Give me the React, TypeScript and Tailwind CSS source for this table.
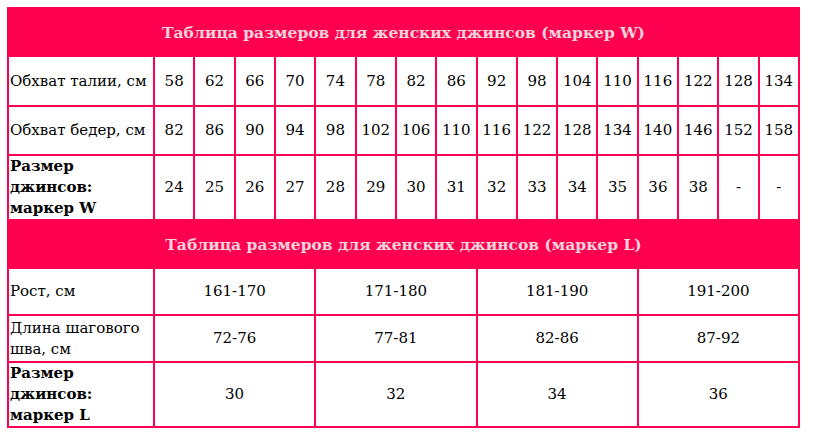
import React from 'react';

const WAIST = ['58', '62', '66', '70', '74', '78', '82', '86', '92', '98', '104', '110', '116', '122', '128', '134'];
const HIPS = ['82', '86', '90', '94', '98', '102', '106', '110', '116', '122', '128', '134', '140', '146', '152', '158'];
const SIZE_W = ['24', '25', '26', '27', '28', '29', '30', '31', '32', '33', '34', '35', '36', '38', '-', '-'];

const HEIGHT = ['161-170', '171-180', '181-190', '191-200'];
const INSEAM = ['72-76', '77-81', '82-86', '87-92'];
const SIZE_L = ['30', '32', '34', '36'];

const cell = 'border-2 border-[#ff0050] text-center p-0';
const label = 'border-2 border-[#ff0050] text-left align-middle pl-[1px] pr-0 py-0';

function Title({ span, children }: { span: number; children: React.ReactNode }) {
  return (
    <tr className="h-[48px]">
      <td
        colSpan={span}
        className="bg-[#ff0050] border-2 border-[#ff0050] text-center text-[#f7d3dc] font-bold text-[15.5px]"
      >
        {children}
      </td>
    </tr>
  );
}

export default function App() {
  return (
    <div
      className="bg-white w-[813px] h-[442px] pt-[7px] pl-[7px] text-[15px] leading-[21px] text-black"
      style={{ fontFamily: '"DejaVu Serif", "Liberation Serif", serif' }}
    >
      <table className="table-fixed border-collapse w-[793px]">
        <colgroup>
          <col className="w-[146px]" />
          {WAIST.map((_, i) => (
            <col key={i} />
          ))}
        </colgroup>
        <tbody>
          <Title span={17}>Таблица размеров для женских джинсов (маркер W)</Title>
          <tr className="h-[50px]">
            <td className={label}>Обхват талии, см</td>
            {WAIST.map((v, i) => (
              <td key={i} className={cell}>{v}</td>
            ))}
          </tr>
          <tr className="h-[49px]">
            <td className={label}>Обхват бедер, см</td>
            {HIPS.map((v, i) => (
              <td key={i} className={cell}>{v}</td>
            ))}
          </tr>
          <tr className="h-[65px]">
            <td className={`${label} font-bold`}>
              Размер
              <br />
              джинсов:
              <br />
              маркер W
            </td>
            {SIZE_W.map((v, i) => (
              <td key={i} className={cell}>{v}</td>
            ))}
          </tr>
        </tbody>
      </table>

      <table className="table-fixed border-collapse w-[793px] -mt-[2px]">
        <colgroup>
          <col className="w-[146px]" />
          <col />
          <col />
          <col />
          <col />
        </colgroup>
        <tbody>
          <Title span={5}>Таблица размеров для женских джинсов (маркер L)</Title>
          <tr className="h-[47px]">
            <td className={label}>Рост, см</td>
            {HEIGHT.map((v, i) => (
              <td key={i} className={cell}>{v}</td>
            ))}
          </tr>
          <tr className="h-[47px]">
            <td className={label}>
              Длина шагового
              <br />
              шва, см
            </td>
            {INSEAM.map((v, i) => (
              <td key={i} className={cell}>{v}</td>
            ))}
          </tr>
          <tr className="h-[64px]">
            <td className={`${label} font-bold`}>
              Размер
              <br />
              джинсов:
              <br />
              маркер L
            </td>
            {SIZE_L.map((v, i) => (
              <td key={i} className={cell}>{v}</td>
            ))}
          </tr>
        </tbody>
      </table>
    </div>
  );
}
